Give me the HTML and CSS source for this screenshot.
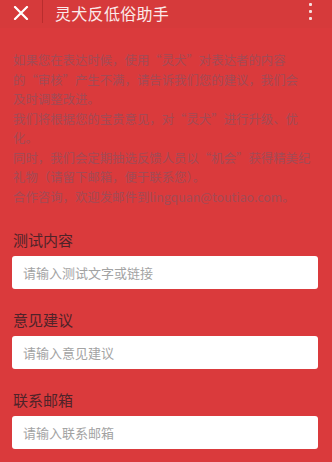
FILE: index.html
```html
<!DOCTYPE html>
<html lang="zh">
<head>
<meta charset="utf-8">
<title>灵犬反低俗助手</title>
<link rel="stylesheet" href="styles.css">
</head>
<body>
<div class="page">
  <header class="topbar">
    <span class="close">
      <svg width="16" height="14" viewBox="0 0 16 14"><path d="M2 1 L14 13 M14 1 L2 13" stroke="#fff" stroke-width="2.2" stroke-linecap="round" fill="none"/></svg>
    </span>
    <span class="divider"></span>
    <span class="title">灵犬反低俗助手</span>
    <span class="more"><i></i><i></i><i></i></span>
  </header>
  <section class="intro">
    <p>如果您在表达时候，使用“灵犬”对表达者的内容<br>的“审核”产生不满，请告诉我们您的建议，我们会<br>及时调整改进。</p>
    <p>我们将根据您的宝贵意见，对“灵犬”进行升级、优<br>化。</p>
    <p>同时，我们会定期抽选反馈人员以“机会”获得精美纪<br>礼物（请留下邮箱，便于联系您）。</p>
    <p>合作咨询，欢迎发邮件到lingquan@toutiao.com。</p>
  </section>
  <form class="form">
    <div class="field">
      <label class="label">测试内容</label>
      <div class="input">请输入测试文字或链接</div>
    </div>
    <div class="field">
      <label class="label">意见建议</label>
      <div class="input">请输入意见建议</div>
    </div>
    <div class="field">
      <label class="label">联系邮箱</label>
      <div class="input">请输入联系邮箱</div>
    </div>
  </form>
</div>
</body>
</html>
```
FILE: styles.css
```css
html, body {
  margin: 0;
  padding: 0;
  background: #da3a3c;
}
body {
  font-family: "Noto Sans CJK SC", "Noto Sans", sans-serif;
  width: 332px;
  height: 462px;
  overflow: hidden;
}
.page {
  display: flex;
  flex-direction: column;
}
.topbar {
  height: 28px;
  background: #d63a3b;
  display: flex;
  align-items: flex-start;
}
.close {
  width: 42px;
  height: 26px;
  display: flex;
  align-items: center;
  justify-content: center;
}
.divider {
  width: 1px;
  height: 23px;
  background: rgba(150, 30, 30, 0.45);
}
.title {
  color: #fbeaea;
  font-size: 16px;
  line-height: 26px;
  margin-left: 12px;
  flex: 1;
  letter-spacing: 0.3px;
}
.more {
  width: 10px;
  margin-right: 17px;
  padding-top: 3px;
  display: flex;
  flex-direction: column;
  align-items: center;
  gap: 4px;
}
.more i {
  width: 3px;
  height: 3px;
  background: #f6dede;
  border-radius: 1px;
}
.intro {
  padding: 23px 10px 0 13px;
  color: #a34a55;
  font-size: 12.4px;
  line-height: 19.5px;
  height: 156px;
  white-space: nowrap;
  overflow: hidden;
}
.intro p {
  margin: 0;
}
.form {
  margin: 22px 14px 0 12px;
  display: flex;
  flex-direction: column;
  gap: 20px;
}
.field {
  display: flex;
  flex-direction: column;
  gap: 5px;
}
.label {
  color: #4f2329;
  font-size: 15px;
  line-height: 22px;
  padding-left: 1px;
}
.input {
  height: 33px;
  background: #fff;
  border-radius: 3px;
  color: #a3a3a3;
  font-size: 13px;
  line-height: 33px;
  padding-left: 11px;
}
```
